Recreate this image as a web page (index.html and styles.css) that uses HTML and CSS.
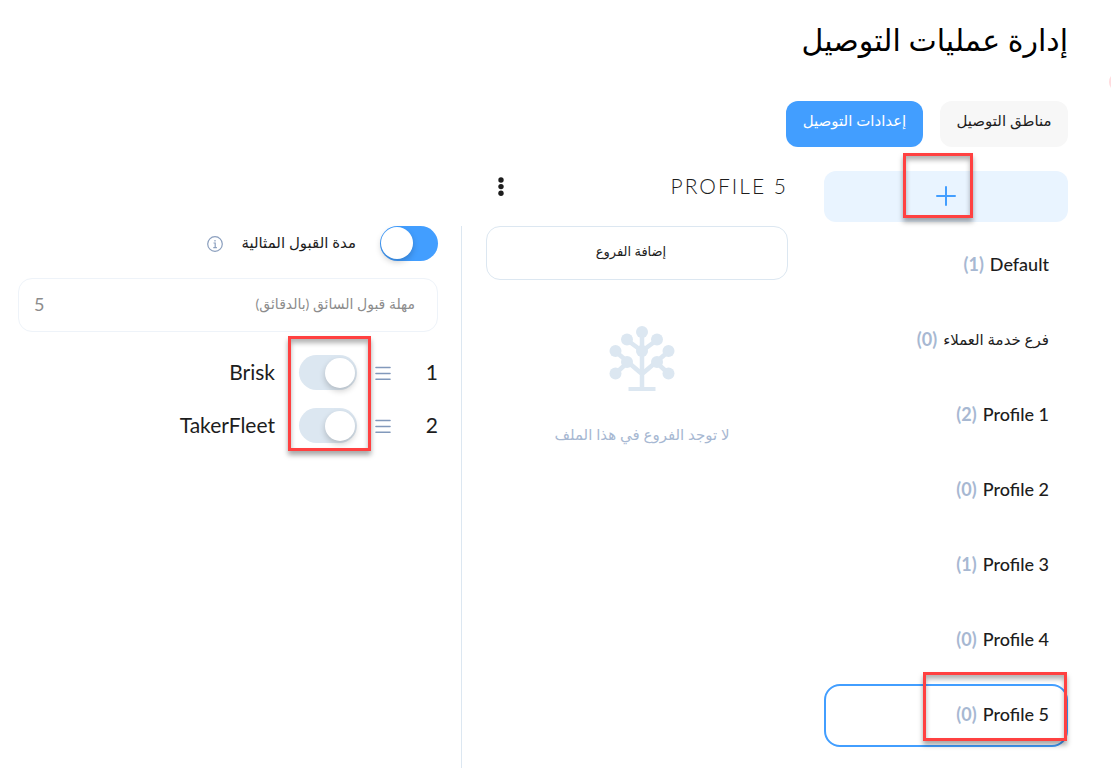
FILE: index.html
```html
<!DOCTYPE html>
<html lang="ar" dir="rtl">
<head>
    <meta charset="UTF-8">
    <meta name="viewport" content="width=device-width, initial-scale=1.0">
    <title>إدارة عمليات التوصيل</title>
    <link rel="stylesheet" href="styles.css">
</head>
<body>

    <div class="page">
        <h1 class="page-title">إدارة عمليات التوصيل</h1>
        <span class="side-dot"></span>

        <nav class="tabs">
            <button type="button" class="tab">مناطق التوصيل</button>
            <button type="button" class="tab tab-active">إعدادات التوصيل</button>
        </nav>

        <main class="content">
            <!-- profiles list -->
            <aside class="profiles">
                <button type="button" class="add-profile" aria-label="إضافة">
                    <svg width="20" height="20" viewBox="0 0 20 20" fill="none" stroke="#429eff" stroke-width="2" stroke-linecap="round"><path d="M10 1v18M1 10h18"/></svg>
                    <span class="mark mark-add"></span>
                </button>
                <button type="button" class="profile"><bdi>Default</bdi><span class="count">(1)</span></button>
                <button type="button" class="profile"><bdi class="profile-ar">فرع خدمة العملاء</bdi><span class="count">(0)</span></button>
                <button type="button" class="profile"><bdi>Profile 1</bdi><span class="count">(2)</span></button>
                <button type="button" class="profile"><bdi>Profile 2</bdi><span class="count">(0)</span></button>
                <button type="button" class="profile"><bdi>Profile 3</bdi><span class="count">(1)</span></button>
                <button type="button" class="profile"><bdi>Profile 4</bdi><span class="count">(0)</span></button>
                <button type="button" class="profile profile-active"><bdi>Profile 5</bdi><span class="count">(0)</span><span class="mark mark-profile"></span></button>
            </aside>

            <!-- branches of the selected profile -->
            <section class="branches">
                <header class="branches-head">
                    <h2 class="branches-title" dir="ltr">PROFILE 5</h2>
                    <button type="button" class="more-btn" aria-label="المزيد">
                        <svg width="6" height="20" viewBox="0 0 6 20" fill="#1d1d1d"><circle cx="3" cy="4" r="2.7"/><circle cx="3" cy="10.6" r="2.7"/><circle cx="3" cy="17.2" r="2.7"/></svg>
                    </button>
                </header>
                <button type="button" class="add-branch">إضافة الفروع</button>
                <div class="empty">
                    <svg width="66" height="66" viewBox="0 0 66 66" fill="#dce7f1" stroke="#dce7f1">
                        <path fill="none" stroke-width="4.5" d="M33 6v56M33 25L18 14M33 25l15-11M33 48L6 25M33 48l27-23M18 37L6 48M48 37l12 11"/>
                        <path fill="none" stroke-width="4" d="M19.5 63h27"/>
                        <g stroke="none">
                            <circle cx="33" cy="6" r="6"/><circle cx="18" cy="13.5" r="6"/><circle cx="48" cy="13.5" r="6"/>
                            <circle cx="33" cy="25" r="6"/><circle cx="6.5" cy="25" r="6"/><circle cx="59.5" cy="25" r="6"/>
                            <circle cx="18" cy="36" r="6"/><circle cx="48" cy="36" r="6"/><circle cx="6.5" cy="47.5" r="6"/><circle cx="59.5" cy="47.5" r="6"/>
                        </g>
                    </svg>
                    <p class="empty-text">لا توجد الفروع في هذا الملف</p>
                </div>
            </section>

            <!-- delivery settings -->
            <section class="settings">
                <div class="setting-row">
                    <input type="checkbox" class="switch" id="ideal" checked>
                    <label for="ideal" class="setting-label">مدة القبول المثالية</label>
                    <svg class="info" width="16" height="16" viewBox="0 0 16 16" fill="none" stroke="#8b9fbe" stroke-width="1.2"><circle cx="8" cy="8" r="7.3"/><path d="M6.5 7h1.7v4.5M6.3 11.6h3.6M8 4v1.4"/></svg>
                </div>
                <div class="field">
                    <label for="timeout" class="field-label">مهلة قبول السائق (بالدقائق)</label>
                    <input type="text" id="timeout" class="field-input" value="5" dir="ltr">
                </div>
                <div class="providers">
                    <div class="provider">
                        <span class="order">1</span>
                        <svg class="drag" width="16" height="14" viewBox="0 0 16 14" stroke="#8299bb" stroke-width="1.6" stroke-linecap="round"><path d="M1 1.5h14M1 7.5h14M1 13.2h14"/></svg>
                        <input type="checkbox" class="switch" id="brisk">
                        <label for="brisk" class="provider-name">Brisk</label>
                    </div>
                    <div class="provider">
                        <span class="order">2</span>
                        <svg class="drag" width="16" height="14" viewBox="0 0 16 14" stroke="#8299bb" stroke-width="1.6" stroke-linecap="round"><path d="M1 1.5h14M1 7.5h14M1 13.2h14"/></svg>
                        <input type="checkbox" class="switch" id="taker">
                        <label for="taker" class="provider-name">TakerFleet</label>
                    </div>
                    <span class="mark mark-switches"></span>
                </div>
            </section>
        </main>
    </div>

</body>
</html>
```

FILE: styles.css
```css
* { box-sizing: border-box; }
body { margin: 0; background: #fff; color: #1d1d1d; font-family: Lato, "DejaVu Sans", sans-serif; }
button { font-family: inherit; color: inherit; cursor: pointer; border: none; background: none; padding: 0; }
.page { position: relative; display: flex; flex-direction: column; min-height: 100vh; padding: 19px 43px 0 18px; overflow: hidden; }
.page-title { margin: 0; font-size: 30px; line-height: 40px; font-weight: 400; color: #000; }
.side-dot { position: absolute; top: 72px; right: -18px; width: 20px; height: 20px; border-radius: 50%; background: #ffdcdf; }

.tabs { display: flex; gap: 17px; margin-top: 42px; }
.tab { height: 46px; width: 128px; padding-bottom: 8px; border-radius: 12px; background: #f7f7f7; font-size: 15px; }
.tab-active { width: 137px; background: #429eff; color: #fff; }

.content { display: flex; flex: 1; margin-top: 24px; }

.profiles { width: 244px; flex-shrink: 0; display: flex; flex-direction: column; gap: 12px; padding-bottom: 21px; }
.add-profile { position: relative; display: flex; align-items: center; justify-content: center; height: 51px; padding-bottom: 2px; border-radius: 12px; background: #e9f4ff; }
.profile { position: relative; display: flex; align-items: center; gap: 6px; height: 63px; padding: 0 17px 3px; border: 2px solid transparent; border-radius: 16px; font-size: 18px; font-weight: 500; }
.profile-active { border-color: #429eff; }
.profile-ar { font-size: 15px; }
.count { color: #a7b8d2; font-weight: 700; }

.branches { width: 302px; flex-shrink: 0; margin: 0 36px 0 24px; }
.branches-head { display: flex; align-items: center; justify-content: space-between; height: 30px; margin-bottom: 25px; }
.branches-title { margin: 0; padding-bottom: 2px; font-size: 21px; font-weight: 300; letter-spacing: 2px; }
.more-btn { display: flex; padding: 0 12px; }
.add-branch { width: 100%; height: 54px; padding: 0 12px 4px 0; border: 1px solid #dce7f1; border-radius: 14px; font-size: 13px; }
.empty { padding: 46px 0 0 10px; text-align: center; }
.empty svg { display: block; margin: 0 auto; }
.empty-text { margin: 30px 0 0; font-size: 15px; line-height: 24px; color: #a7b8d2; }

.settings { flex: 1; margin-top: 55px; padding-right: 23px; border-right: 1px solid #dce7f1; }
.setting-row { display: flex; align-items: center; height: 35px; }
.setting-label { margin: 0 24px 0 18px; padding-bottom: 2px; font-size: 15px; }
.field { display: flex; align-items: center; height: 54px; margin-top: 17px; padding: 0 22px 2px 15px; border: 1px solid #eef3f9; border-radius: 14px; color: #8c8c8c; }
.field-label { flex-shrink: 0; padding-bottom: 2px; font-size: 14px; }
.field-input { flex: 1; min-width: 0; padding: 0; border: none; outline: none; background: none; color: inherit; font: 18px Lato, sans-serif; text-align: left; }

.providers { position: relative; display: flex; flex-direction: column; gap: 18px; margin-top: 23px; }
.provider { display: flex; align-items: center; height: 35px; font-size: 21px; }
.order { width: 47px; padding-bottom: 2px; }
.drag { margin-left: 18px; }
.provider-name { margin-right: 24px; padding-bottom: 2px; }

.switch { appearance: none; position: relative; flex-shrink: 0; width: 58px; height: 35px; margin: 0; border-radius: 18px; background: #dce7f1; cursor: pointer; }
.switch::before { content: ""; position: absolute; top: 3px; right: 2px; width: 30px; height: 30px; border-radius: 50%; background: #fff; box-shadow: 0 3px 6px rgba(0, 0, 0, 0.2); }
.switch:checked { background: #429eff; }
.switch:checked::before { top: 1px; right: 25px; width: 32px; height: 32px; }

/* red callout frames */
.mark { position: absolute; border: 3px solid #ff4141; box-shadow: 0 4px 5px rgba(0, 0, 0, 0.35), inset 0 4px 5px rgba(0, 0, 0, 0.3); pointer-events: none; }
.mark-add { top: -18px; right: 95px; width: 70px; height: 65px; }
.mark-profile { top: -14px; right: -1px; width: 144px; height: 69px; }
.mark-switches { top: -19px; right: 67px; width: 83px; height: 115px; }
```
